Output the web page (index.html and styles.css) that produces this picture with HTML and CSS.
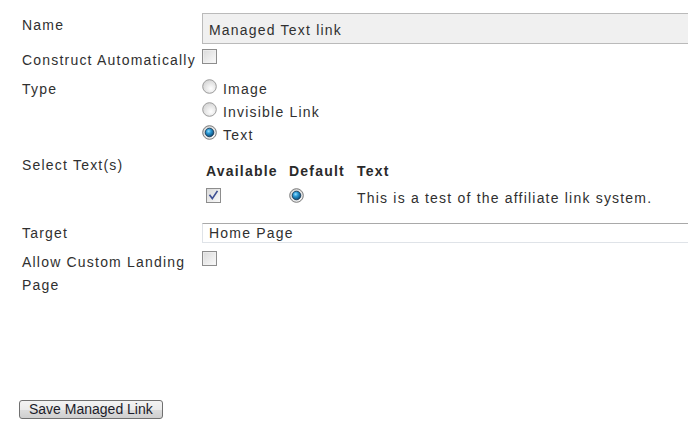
FILE: index.html
```html
<!DOCTYPE html>
<html lang="en">
<head>
<meta charset="utf-8">
<title>Managed Link</title>
<link rel="stylesheet" href="styles.css">
</head>
<body>
<svg class="defs" width="0" height="0" aria-hidden="true">
  <defs>
    <linearGradient id="boxFill" x1="0" y1="0" x2="1" y2="1">
      <stop offset="0" stop-color="#d9d9d9"/>
      <stop offset="1" stop-color="#fbfbfb"/>
    </linearGradient>
    <radialGradient id="radioFill" cx="0.6" cy="0.65" r="0.7">
      <stop offset="0" stop-color="#ffffff"/>
      <stop offset="1" stop-color="#d2d2d2"/>
    </radialGradient>
    <radialGradient id="dotFill" cx="0.4" cy="0.35" r="0.75">
      <stop offset="0" stop-color="#9be0ff"/>
      <stop offset="0.35" stop-color="#2a9ad6"/>
      <stop offset="1" stop-color="#06365e"/>
    </radialGradient>
    <symbol id="cb" viewBox="0 0 15 15">
      <rect x="0.5" y="0.5" width="14" height="14" fill="url(#boxFill)" stroke="#8d8d8d"/>
      <rect x="1.5" y="1.5" width="12" height="12" fill="none" stroke="#f1f1f1" stroke-opacity="0.6"/>
    </symbol>
    <symbol id="cb-on" viewBox="0 0 15 15">
      <rect x="0.5" y="0.5" width="14" height="14" fill="url(#boxFill)" stroke="#8d8d8d"/>
      <path d="M4 7.5 L6.3 10.6 L11 3.6" fill="none" stroke="#3e4f93" stroke-width="1.7" stroke-linecap="square"/>
    </symbol>
    <symbol id="rb" viewBox="0 0 15 15">
      <circle cx="7.5" cy="7.5" r="6.8" fill="url(#radioFill)" stroke="#9b9b9b" stroke-width="1"/>
    </symbol>
    <symbol id="rb-on" viewBox="0 0 15 15">
      <circle cx="7.5" cy="7.5" r="6.8" fill="url(#radioFill)" stroke="#7b7b7b" stroke-width="1"/>
      <circle cx="7.5" cy="7.5" r="4.3" fill="url(#dotFill)" stroke="#0e2f4c" stroke-width="0.8"/>
    </symbol>
  </defs>
</svg>

<form class="link-form">
  <div class="fields">
    <div class="row row-first">
      <div class="label">Name</div>
      <div class="field">
        <div class="text-input">Managed Text link</div>
      </div>
    </div>

    <div class="row row-tight">
      <div class="label">Construct Automatically</div>
      <div class="field">
        <svg class="box box-flush"><use href="#cb"/></svg>
      </div>
    </div>

    <div class="row row-type">
      <div class="label">Type</div>
      <div class="field options">
        <label class="option"><svg class="box"><use href="#rb"/></svg>Image</label>
        <label class="option"><svg class="box"><use href="#rb"/></svg>Invisible Link</label>
        <label class="option"><svg class="box"><use href="#rb-on"/></svg>Text</label>
      </div>
    </div>

    <div class="row">
      <div class="label">Select Text(s)</div>
      <div class="field">
        <div class="text-table">
          <div class="th">Available</div>
          <div class="th">Default</div>
          <div class="th">Text</div>
          <div class="td"><svg class="box"><use href="#cb-on"/></svg></div>
          <div class="td"><svg class="box"><use href="#rb-on"/></svg></div>
          <div class="td">This is a test of the affiliate link system.</div>
        </div>
      </div>
    </div>

    <div class="row">
      <div class="label">Target</div>
      <div class="field">
        <div class="select-input">Home Page</div>
      </div>
    </div>

    <div class="row row-snug">
      <div class="label">Allow Custom Landing Page</div>
      <div class="field">
        <svg class="box box-flush"><use href="#cb"/></svg>
      </div>
    </div>
  </div>

  <div class="actions">
    <button type="button" class="save">Save Managed Link</button>
  </div>
</form>
</body>
</html>
```

FILE: styles.css
```css
html, body {
  margin: 0;
  padding: 0;
  overflow: hidden;
  background: #ffffff;
}

body {
  font-family: "Liberation Sans", Arial, sans-serif;
  font-size: 14px;
  color: #303030;
  letter-spacing: 1.2px;
}

.defs {
  position: absolute;
  width: 0;
  height: 0;
}

.link-form {
  padding-left: 19px;
}

.fields {
  padding-left: 3px;
}

.row {
  display: flex;
  padding-top: 7px;
  line-height: 23px;
}

.row-first {
  padding-top: 13px;
}

.row-tight {
  padding-top: 5px;
}

.row-type {
  padding-top: 6px;
}

.row-snug {
  padding-top: 6px;
}

.label {
  width: 180px;
  flex: none;
}

.row-first .label {
  padding-top: 1px;
}

.field {
  flex: none;
}

.box {
  display: block;
  width: 15px;
  height: 15px;
  margin-top: 1px;
}

.box-flush {
  margin-top: 0;
}

/* text boxes run past the right edge of the window */
.text-input {
  box-sizing: border-box;
  width: 520px;
  height: 31px;
  line-height: 30px;
  padding: 1px 6px 0;
  background: #f0f0f0;
  border: 1px solid #bababa;
  border-right: none;
}

.select-input {
  box-sizing: border-box;
  width: 520px;
  height: 20px;
  margin-top: 1px;
  line-height: 18px;
  padding: 0 6px;
  background: #ffffff;
  border: 1px solid #dfe3e8;
  border-top-color: #a9a9a9;
  border-right: none;
}

.options {
  display: flex;
  flex-direction: column;
}

.option {
  display: flex;
  align-items: flex-start;
  gap: 6px;
  height: 23px;
}

.text-table {
  display: grid;
  grid-template-columns: 83px 68px auto;
  grid-template-rows: 23px 23px;
  row-gap: 4px;
  padding: 6px 0 5px 4px;
}

.th {
  font-weight: bold;
  color: #2a2a2a;
}

.save {
  font-family: "Liberation Sans", Arial, sans-serif;
  font-size: 14px;
  letter-spacing: 0;
  color: #1c1c2a;
  height: 19px;
  line-height: 17px;
  padding: 0 9px;
  margin: 0;
  border: 1px solid #707070;
  border-radius: 3px;
  background: linear-gradient(#f3f3f3, #ebebeb 50%, #dddddd 51%, #cfcfcf);
  box-sizing: border-box;
}

.actions {
  margin-top: 103px;
}
```
